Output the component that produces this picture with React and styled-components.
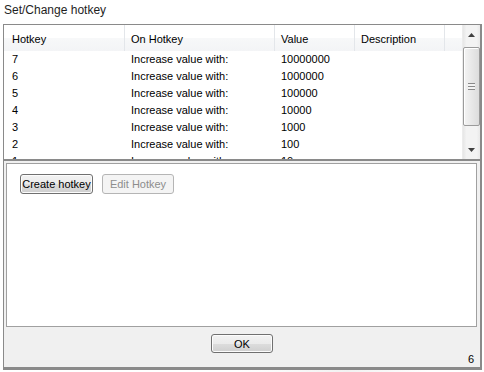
import React from "react";
import styled, { createGlobalStyle } from "styled-components";

const GlobalStyle = createGlobalStyle`
  html, body {
    margin: 0;
    padding: 0;
    background: #ffffff;
  }
  body {
    font-family: "Liberation Sans", Arial, sans-serif;
    font-size: 11px;
    color: #000;
  }
`;

const hotkeys = [
  { key: "7", action: "Increase value with:", value: "10000000", desc: "" },
  { key: "6", action: "Increase value with:", value: "1000000", desc: "" },
  { key: "5", action: "Increase value with:", value: "100000", desc: "" },
  { key: "4", action: "Increase value with:", value: "10000", desc: "" },
  { key: "3", action: "Increase value with:", value: "1000", desc: "" },
  { key: "2", action: "Increase value with:", value: "100", desc: "" },
  { key: "1", action: "Increase value with:", value: "10", desc: "" },
];

const columns = [
  { title: "Hotkey", width: 121, pad: 8 },
  { title: "On Hotkey", width: 150, pad: 6 },
  { title: "Value", width: 80, pad: 6 },
  { title: "Description", width: 90, pad: 6 },
];

const Page = styled.div`
  width: 484px;
  height: 372px;
  background: linear-gradient(100deg, #ffffff 55%, #f2f2f2 75%, #ffffff 90%);
`;

const Title = styled.div`
  height: 24px;
  line-height: 21px;
  padding-left: 4px;
  font-size: 12px;
  color: #1e1e1e;
  background: #ffffff;
`;

const Frame = styled.div`
  box-sizing: border-box;
  margin-left: 3px;
  width: 479px;
  height: 346px;
  border: 1px solid #8a8a8a;
  border-right-width: 2px;
  border-bottom-width: 3px;
  background: #f0f0f0;
  display: flex;
  flex-direction: column;
`;

const List = styled.div`
  display: flex;
  height: 134px;
  background: #ffffff;
  border-bottom: 2px solid #8a8a8a;
`;

const ListMain = styled.div`
  flex: 1;
  display: flex;
  flex-direction: column;
  overflow: hidden;
`;

const Header = styled.div`
  display: flex;
  height: 26px;
  flex-shrink: 0;
  background: linear-gradient(#ffffff 0%, #ffffff 50%, #f7f8f9 51%, #f3f4f6 100%);
`;

const HeadCell = styled.div`
  box-sizing: border-box;
  width: ${(p) => p.$w}px;
  padding-left: ${(p) => p.$pad}px;
  line-height: 28px;
  border-right: 1px solid #e3e6ea;
  white-space: nowrap;
`;

const HeadFiller = styled.div`
  flex: 1;
`;

const Rows = styled.div`
  flex: 1;
  overflow: hidden;
`;

const Row = styled.div`
  display: flex;
  height: 17px;
  line-height: 17px;
`;

const Cell = styled.div`
  box-sizing: border-box;
  width: ${(p) => p.$w}px;
  padding-left: ${(p) => p.$pad}px;
  white-space: nowrap;
  overflow: hidden;
`;

const ScrollBar = styled.div`
  width: 17px;
  display: flex;
  flex-direction: column;
  background: linear-gradient(90deg, #e6e6e6, #f3f3f3 20%, #f3f3f3 80%, #e9e9e9);
  border-left: 1px solid #ececec;
`;

const Arrow = styled.div`
  height: 19px;
  flex-shrink: 0;
  display: flex;
  align-items: center;
  justify-content: center;
`;

const Track = styled.div`
  flex: 1;
  padding-top: 3px;
`;

const Thumb = styled.div`
  box-sizing: border-box;
  height: 79px;
  border: 1px solid #9b9b9b;
  border-radius: 2px;
  background: linear-gradient(90deg, #f4f4f4, #e8e8e8 50%, #dcdcdc);
  box-shadow: inset 1px 1px 0 #ffffff;
  display: flex;
  align-items: center;
  justify-content: center;
`;

const Grip = styled.div`
  width: 7px;
  height: 7px;
  background: repeating-linear-gradient(#8a8a8a 0, #8a8a8a 1px, #f4f4f4 1px, #f4f4f4 3px);
`;

const Panel = styled.div`
  box-sizing: border-box;
  height: 164px;
  margin: 2px 3px 0 2px;
  border: 1px solid #a0a0a0;
  background: #ffffff;
  padding: 10px 0 0 13px;
  display: flex;
  align-items: flex-start;
  gap: 9px;
`;

const Button = styled.button`
  box-sizing: border-box;
  width: ${(p) => p.$w}px;
  height: 20px;
  padding: 0;
  font-family: "Liberation Sans", Arial, sans-serif;
  font-size: 11px;
  font-weight: normal;
  color: ${(p) => (p.disabled ? "#8d8d8d" : "#000000")};
  border: 1px solid ${(p) => (p.disabled ? "#b5b5b5" : "#707070")};
  border-radius: 3px;
  background: ${(p) =>
    p.disabled
      ? "#f4f4f4"
      : "linear-gradient(#f2f2f2 0%, #ebebeb 50%, #dddddd 51%, #cfcfcf 100%)"};
  box-shadow: ${(p) => (p.disabled ? "none" : "inset 0 0 0 1px #fcfcfc")};
`;

const Footer = styled.div`
  flex: 1;
  display: grid;
  grid-template-columns: 1fr auto 1fr;
  padding-top: 7px;
`;

const OkButton = styled(Button)`
  grid-column: 2;
  height: 19px;
`;

const Count = styled.div`
  grid-column: 3;
  justify-self: end;
  align-self: end;
  padding: 0 6px 1px 0;
  line-height: 14px;
  font-size: 11px;
  font-weight: normal;
`;

const Tri = ({ down }) => (
  <svg width="7" height="4" viewBox="0 0 7 4">
    <path d={down ? "M0 0 H7 L3.5 4 Z" : "M0 4 H7 L3.5 0 Z"} fill="#404040" />
  </svg>
);

export default function App() {
  return (
    <Page>
      <GlobalStyle />
      <Title>Set/Change hotkey</Title>
      <Frame>
        <List>
          <ListMain>
            <Header>
              {columns.map((c) => (
                <HeadCell key={c.title} $w={c.width} $pad={c.pad}>
                  {c.title}
                </HeadCell>
              ))}
              <HeadFiller />
            </Header>
            <Rows>
              {hotkeys.map((h) => (
                <Row key={h.key}>
                  <Cell $w={columns[0].width} $pad={columns[0].pad}>{h.key}</Cell>
                  <Cell $w={columns[1].width} $pad={columns[1].pad}>{h.action}</Cell>
                  <Cell $w={columns[2].width} $pad={columns[2].pad}>{h.value}</Cell>
                  <Cell $w={columns[3].width} $pad={columns[3].pad}>{h.desc}</Cell>
                </Row>
              ))}
            </Rows>
          </ListMain>
          <ScrollBar>
            <Arrow>
              <Tri />
            </Arrow>
            <Track>
              <Thumb>
                <Grip />
              </Thumb>
            </Track>
            <Arrow>
              <Tri down />
            </Arrow>
          </ScrollBar>
        </List>
        <Panel>
          <Button $w={73}>Create hotkey</Button>
          <Button $w={72} disabled>
            Edit Hotkey
          </Button>
        </Panel>
        <Footer>
          <OkButton $w={62}>OK</OkButton>
          <Count>6</Count>
        </Footer>
      </Frame>
    </Page>
  );
}
